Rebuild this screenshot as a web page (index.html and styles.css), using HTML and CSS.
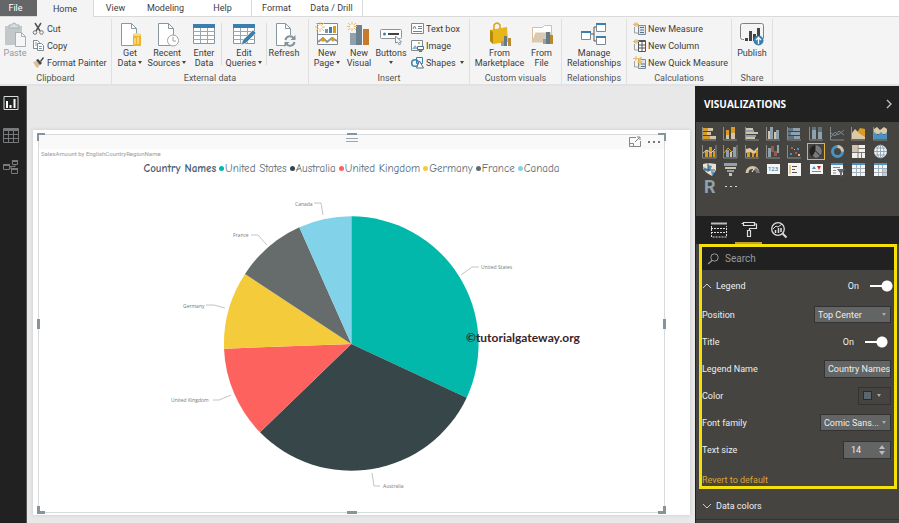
FILE: index.html
```html
<!DOCTYPE html>
<html lang="en">
	<head>
		<meta charset="utf-8">
		<title>Power BI Desktop</title>
		<link rel="stylesheet" href="styles.css">
	</head>
	<body>
		<nav class="tabs">
			<button class="tab file">File</button>
			<button class="tab active">Home</button>
			<button class="tab">View</button>
			<button class="tab long">Modeling</button>
			<button class="tab long">Help</button>
			<button class="tab format">Format</button>
			<button class="tab drill">Data / Drill</button>
		</nav>

		<!-- ribbon -->
		<header class="ribbon">
			<section class="group">
				<div class="tools start">
					<button class="big paste">
						<svg width="24" height="26" viewBox="0 0 24 26"><path d="M2 4h17v19H2z" fill="#c3c8cb"/><path d="M6 6V3h3a2 2 0 0 1 4 0h3v3z" fill="#d9dcde" stroke="#aab1b5"/><path d="M12.500 10.500h6l4 4v10h-10z" fill="#f6f6f6" stroke="#aab1b5"/><path d="M18.500 10.500v4h4" fill="none" stroke="#aab1b5"/></svg>
						<span>Paste</span>
					</button>
					<div class="list">
						<button class="small"><svg width="13" height="13" viewBox="0 0 13 13"><path d="M3 1l5 8M9 1L4 9" stroke="#555" stroke-width="1.500" fill="none"/><circle cx="3" cy="10.500" r="1.800" fill="none" stroke="#777"/><circle cx="9.500" cy="10.500" r="1.800" fill="none" stroke="#777"/></svg>Cut</button>
						<button class="small"><svg width="13" height="13" viewBox="0 0 13 13"><path d="M1.500 1.500h4l2 2v6h-6z" fill="#fff" stroke="#7c8a92"/><path d="M5.500 4.500h4l2 2v5h-6z" fill="#fff" stroke="#7c8a92"/><path d="M3 4h2M3 6h2M7 7.500h3M7 9.500h3" stroke="#7c9cb0"/></svg>Copy</button>
						<button class="small"><svg width="13" height="13" viewBox="0 0 13 13"><path d="M1 6l4-1 3 3-2 4-2-1z" fill="#dcbf93"/><path d="M4 4l2-1 4 4-2 2z" fill="#444"/><path d="M8 5l3-4 1 1-3 4z" fill="#444"/></svg>Format Painter</button>
					</div>
				</div>
				<h2>Clipboard</h2>
			</section>

			<section class="group">
				<div class="tools start">
					<button class="big">
						<svg width="24" height="26" viewBox="0 0 24 26"><path d="M3.500 1.500h10l5 5v17h-15z" fill="#fff" stroke="#8a979e"/><path d="M13.500 1.500v5h5" fill="none" stroke="#8a979e"/><path d="M15 12h8v12h-8z" fill="#eeb52c"/><ellipse cx="19" cy="12.500" rx="4" ry="1.500" fill="#f8d98a"/><path d="M17 16v6M20 15v7" stroke="#fff3cf"/></svg>
						<span>Get<br>Data <i></i></span>
					</button>
					<button class="big wide">
						<svg width="24" height="26" viewBox="0 0 24 26"><path d="M3.500 1.500h10l5 5v17h-15z" fill="#fff" stroke="#8a979e"/><path d="M13.500 1.500v5h5" fill="none" stroke="#8a979e"/><circle cx="18" cy="18.500" r="5.500" fill="#fff" stroke="#9aa5ab"/><path d="M18 15v4h3" fill="none" stroke="#9aa5ab"/></svg>
						<span>Recent<br>Sources <i></i></span>
					</button>
					<button class="big">
						<svg width="24" height="26" viewBox="0 0 24 26"><path d="M1.500 2.500h21v19h-21z" fill="#fff" stroke="#8a979e"/><path d="M1 2h22v4H1z" fill="#3a80ae"/><path d="M1 9.500h22M1 13.500h22M1 17.500h22M8.500 6v15M15.500 6v15" stroke="#9ba8af"/></svg>
						<span>Enter<br>Data</span>
					</button>
					<hr>
					<button class="big wide">
						<svg width="24" height="26" viewBox="0 0 24 26"><path d="M1.500 2.500h21v19h-21z" fill="#fff" stroke="#8a979e"/><path d="M1 2h22v4H1z" fill="#3a80ae"/><path d="M1 9.500h22M1 13.500h22M1 17.500h22M8.500 6v15M15.500 6v15" stroke="#9ba8af"/><path d="M9 23l2-5L21 8l3 3-10 10z" fill="#3a80ae" stroke="#f4f4f4" stroke-width=".6"/></svg>
						<span>Edit<br>Queries <i></i></span>
					</button>
					<hr>
					<button class="big">
						<svg width="24" height="26" viewBox="0 0 24 26"><path d="M4.500 1.500h9l5 5v17h-14z" fill="#fff" stroke="#8a979e"/><path d="M13.500 1.500v5h5" fill="none" stroke="#8a979e"/><circle cx="18" cy="19" r="6" fill="#f4f4f4"/><path d="M13.500 18a4.500 4.500 0 0 1 8-2M22.500 20a4.500 4.500 0 0 1-8 2" fill="none" stroke="#84929a" stroke-width="2"/><path d="M23.500 13v5h-5zM12.500 25v-5h5z" fill="#84929a"/></svg>
						<span>Refresh</span>
					</button>
				</div>
				<h2>External data</h2>
			</section>

			<section class="group">
				<div class="tools start">
					<button class="big">
						<svg width="24" height="26" viewBox="0 0 24 26"><path d="M2.500 1.500h20v21h-20zM2.500 12.500h20" fill="#fff" stroke="#7e8a91"/><path d="M10 7h3v4h-3z" fill="#8496a2"/><path d="M14 5h3v6h-3z" fill="#3a80ae"/><path d="M18 4h3v7h-3z" fill="#d99b22"/><path d="M3 20l5-4 4 4 5-4 5 3" fill="none" stroke="#8496a2" stroke-width="2"/><path d="M5 18l3-3 3 3-3 2zM15 17l3-2 2 2-2 3z" fill="#d99b22"/><path d="M5 0v10M0 5h10M1 1l8 8M9 1L1 9" stroke="#e5ba6c"/><circle cx="5" cy="5" r="2" fill="#fff"/></svg>
						<span>New<br>Page <i></i></span>
					</button>
					<button class="big">
						<svg width="24" height="26" viewBox="0 0 24 26"><path d="M3 11h6v12H3z" fill="#8fa1ac"/><path d="M9 3h6v20H9z" fill="#6b8090"/><path d="M16 7h6v16h-6z" fill="#c7792c"/><path d="M5 0v9M0 4.500h10M1 1l8 7M9 1L1 8" stroke="#e5ba6c"/><circle cx="5" cy="4.500" r="2" fill="#fff"/></svg>
						<span>New<br>Visual</span>
					</button>
					<button class="big">
						<svg width="24" height="26" viewBox="0 0 24 26"><rect x="1.500" y="7.500" width="21" height="9" rx="1" fill="#fff" stroke="#87949b"/><circle cx="5.500" cy="12" r="1.500" fill="#3a80ae"/><path d="M9 12h11" stroke="#444" stroke-width="2"/><path d="M16.500 14v7l2-1 2 3 1-1-1-2h2z" fill="#fff" stroke="#87949b"/></svg>
						<span>Buttons<br><i></i></span>
					</button>
					<div class="list">
						<button class="small"><svg width="13" height="13" viewBox="0 0 13 13"><path d="M.5 1.500h12v10H.5z" fill="#fff" stroke="#7c8a92"/><path d="M2 7l1.500-3L5 7M7 4.500h4M7 6.500h4M2 9.500h9" fill="none" stroke="#6f8593"/></svg>Text box</button>
						<button class="small"><svg width="13" height="13" viewBox="0 0 13 13"><path d="M.5 1.500h11v10H.5z" fill="#fff" stroke="#7c8a92"/><path d="M1 10l3-4 3 4z" fill="#8fb5cc"/><path d="M6.500 7.500h6v3h-6zM8 12.500h3" fill="#fff" stroke="#4c6f88"/><circle cx="8" cy="4" r="1" fill="#d99b22"/></svg>Image</button>
						<button class="small"><svg width="13" height="13" viewBox="0 0 13 13"><circle cx="4" cy="7" r="3.300" fill="none" stroke="#3a80ae" stroke-width="1.500"/><path d="M5.500 1.500h6v6h-6z" fill="none" stroke="#3a80ae"/><path d="M8.500 5l4 7h-7z" fill="#fff" stroke="#4c6f88"/></svg>Shapes <i></i></button>
					</div>
				</div>
				<h2>Insert</h2>
			</section>

			<section class="group">
				<div class="tools">
					<button class="big xwide">
						<svg width="24" height="26" viewBox="0 0 24 26"><path d="M2 8l17-3 1 15-15 2-3-3z" fill="#e8b51b"/><path d="M2 8l3 2v12l-3-3z" fill="#b58a0c"/><path d="M6 8V3q3-4 6 0v4" fill="none" stroke="#d9a514" stroke-width="1.500"/><path d="M13 19h3v5h-3z" fill="#8fa1ac"/><path d="M16 14h3v10h-3z" fill="#647a89"/><path d="M20 16h3v8h-3z" fill="#b9892f"/></svg>
						<span>From<br>Marketplace</span>
					</button>
					<button class="big">
						<svg width="24" height="26" viewBox="0 0 24 26"><path d="M2.500 19.500v-14h10l2-2h7v16z" fill="#fff" stroke="#dcbf93"/><path d="M1.500 20.500l4-10h17l-3 10z" fill="#d8c9b0"/><path d="M13 17h3v5h-3z" fill="#8fa1ac"/><path d="M16 10h4v12h-4z" fill="#647a89"/><path d="M20 13h3v9h-3z" fill="#b9892f"/></svg>
						<span>From<br>File</span>
					</button>
				</div>
				<h2>Custom visuals</h2>
			</section>

			<section class="group">
				<div class="tools">
					<button class="big xwide">
						<svg width="26" height="26" viewBox="0 0 26 26"><path d="M8 12h5V5h4M13 12v7h4" fill="none" stroke="#555"/><path d="M.5 9.500h9v8h-9zM15.500 1.500h9v8h-9zM15.500 14.500h9v8h-9z" fill="#fff" stroke="#7e8a91"/><path d="M0 9h10v2H0zM15 1h10v2H15zM15 14h10v2H15z" fill="#3a80ae"/></svg>
						<span>Manage<br>Relationships</span>
					</button>
				</div>
				<h2>Relationships</h2>
			</section>

			<section class="group">
				<div class="tools start">
					<div class="list">
						<button class="small"><svg width="13" height="13" viewBox="0 0 13 13"><path d="M1.500 5v6h4" fill="none" stroke="#98a3a9"/><path d="M5.500 3.500h7v9h-7z" fill="#dfe5e8" stroke="#7c8a92"/><path d="M7 5.500h4M7 8h4M7 10.500h4" stroke="#54788f"/><path d="M3 0v5M0 2.500h6M1 1l4 3M5 1L1 4" stroke="#e5ba6c"/></svg>New Measure</button>
						<button class="small"><svg width="13" height="13" viewBox="0 0 13 13"><path d="M1.500 5v6h4" fill="none" stroke="#98a3a9"/><path d="M5.500 1.500h7v11h-7z" fill="#fff" stroke="#555"/><path d="M5 2.500h8M5 6h8M5 9h8M9 2v10" stroke="#555"/><path d="M3 0v5M0 2.500h6M1 1l4 3M5 1L1 4" stroke="#e5ba6c"/></svg>New Column</button>
						<button class="small"><svg width="13" height="13" viewBox="0 0 13 13"><path d="M1.500 5v6h4" fill="none" stroke="#98a3a9"/><path d="M5.500 3.500h7v9h-7z" fill="#dfe5e8" stroke="#7c8a92"/><path d="M8 8h4M8 10.500h4" stroke="#54788f"/><path d="M7 1L4 7h3l-2 5 5-7H7l2-4z" fill="#e8bf60"/><path d="M3 0v5M0 2.500h6" stroke="#e5ba6c"/></svg>New Quick Measure</button>
					</div>
				</div>
				<h2>Calculations</h2>
			</section>

			<section class="group">
				<div class="tools">
					<button class="big wide">
						<svg width="26" height="26" viewBox="0 0 26 26"><path d="M5 17.500H3.500a2 2 0 0 1-2-2v-12a2 2 0 0 1 2-2h19a2 2 0 0 1 2 2v13" fill="none" stroke="#87807a"/><path d="M7.500 19v-3M11.500 19V9M15.500 19v-7M19.500 19V6" stroke="#444" stroke-width="3"/><circle cx="19.500" cy="18.500" r="5" fill="#3a80ae"/><path d="M19.500 22v-6M17 18l2.500-2.500L22 18" fill="none" stroke="#fff" stroke-width="1.300"/></svg>
						<span>Publish</span>
					</button>
				</div>
				<h2>Share</h2>
			</section>
		</header>

		<main class="workspace">
			<nav class="rail">
				<button aria-label="Report"><svg width="16" height="16" viewBox="0 0 16 16"><path d="M1 1.500h14v13H1z" fill="none" stroke="#d5dde0"/><path d="M4 13V6M7.500 13v-3M11.500 13V4" stroke="#fff" stroke-width="2"/></svg></button>
				<button aria-label="Data"><svg width="16" height="16" viewBox="0 0 16 16"><path d="M.5 1.500h15v14H.5zM1 3.500h14M1 7.500h14M1 11.500h14M5.500 4v11M10.500 4v11" fill="none" stroke="#77797a"/><path d="M1 2h14v2H1z" fill="#77797a"/></svg></button>
				<button aria-label="Relationships"><svg width="16" height="16" viewBox="0 0 16 16"><path d="M.5 5.500h6v5h-6zM9.500 1.500h5v4h-5zM8.500 9.500h6v5h-6zM6 7.500h6V5M8 7.500V10" fill="none" stroke="#77797a"/><path d="M0 5h7v2H0zM9 1h6v2H9zM8 9h7v2H8z" fill="#77797a"/></svg></button>
			</nav>

			<div class="canvas">
				<div class="page">
					<article class="visual">
						<b class="handle tl"></b><b class="handle tr"></b><b class="handle bl"></b><b class="handle br"></b>
						<b class="handle tc"></b><b class="handle bc"></b><b class="handle lc"></b><b class="handle rc"></b>
						<div class="visual-bar">
							<span class="grip"></span>
							<button aria-label="Focus mode"><svg width="12" height="12" viewBox="0 0 12 12"><path d="M7 1.500H.5v9h11V5M.5 7.500h4v3M6 6l4.500-4.500M8 1h3v3" fill="none" stroke="#8b8580"/></svg></button>
							<button aria-label="More options"><svg width="12" height="12" viewBox="0 0 12 12"><path d="M0 5h2v2H0zM5 5h2v2H5zM10 5h2v2h-2z" fill="#777"/></svg></button>
						</div>
						<h1>SalesAmount by EnglishCountryRegionName</h1>
						<ul class="legend">
							<li class="name">Country Names</li>
							<li class="us">United States</li>
							<li class="au">Australia</li>
							<li class="uk">United Kingdom</li>
							<li class="de">Germany</li>
							<li class="fr">France</li>
							<li class="ca">Canada</li>
						</ul>
						<svg class="pie" viewBox="0 0 625 334">
							<path fill="#01b8aa" d="M312.300 166V38.300A127.700 127.700 0 0 1 427.700 219.700z"/>
							<path fill="#374649" d="M312.300 166L427.700 219.700A127.700 127.700 0 0 1 221 254.300z"/>
							<path fill="#fd625e" d="M312.300 166L221 254.300A127.700 127.700 0 0 1 185 170.700z"/>
							<path fill="#f4cb3b" d="M312.300 166L185 170.700A127.700 127.700 0 0 1 206 96z"/>
							<path fill="#666b6b" d="M312.300 166L206 96A127.700 127.700 0 0 1 260.300 49.300z"/>
							<path fill="#82d3e9" d="M312.300 166L260.300 49.300A127.700 127.700 0 0 1 312.300 38.300z"/>
							<g class="leader">
								<path d="M275 25h7l2 12M422 97l11-8h7M212 57h7l9 10M167 127h8l11 3M174 222h6l12-5M333 295l2 13h6"/>
							</g>
							<text x="256" y="28">Canada</text>
							<text x="442" y="91">United States</text>
							<text x="194" y="59">France</text>
							<text x="144" y="130">Germany</text>
							<text x="132" y="224">United Kingdom</text>
							<text x="344" y="310">Australia</text>
							<text class="mark" x="427" y="164">©tutorialgateway.org</text>
						</svg>
					</article>
				</div>
			</div>

			<aside class="panel">
				<header>
					<h2>VISUALIZATIONS</h2>
					<button aria-label="Collapse"><svg width="6" height="10" viewBox="0 0 6 10"><path d="M1 1l4 4-4 4" fill="none" stroke="#c4c2bf" stroke-width="1.300"/></svg></button>
				</header>

				<div class="gallery">
					<button aria-label="Stacked bar"><svg viewBox="0 0 15 15"><path class="axis" d="M.5 1v13H14"/><path d="M1 2h5v3H1zM1 6h4v3H1zM1 10h7v3H1z" fill="#d99b22"/><path d="M6 2h5v3H6zM5 6h4v3H5zM8 10h6v3H8z" fill="#d2c4aa"/></svg></button>
					<button aria-label="Stacked column"><svg viewBox="0 0 15 15"><path class="axis" d="M.5 1v13H14"/><path d="M3 9h3v4H3zM8 7h4v6H8z" fill="#d2c4aa"/><path d="M3 4h3v5H3zM8 1h4v6H8z" fill="#d99b22"/></svg></button>
					<button aria-label="Clustered bar"><svg viewBox="0 0 15 15"><path class="axis" d="M.5 1v13H14"/><path d="M1 2h7v2H1zM1 6h12v2H1zM1 11h9v2H1z" fill="#d2c4aa"/><path d="M1 4h8v2H1zM1 9h10v2H1z" fill="#8fa1ac"/></svg></button>
					<button aria-label="Clustered column"><svg viewBox="0 0 15 15"><path class="axis" d="M.5 1v13H14"/><path d="M2 5h2v8H2zM8 6h2v7H8z" fill="#d2c4aa"/><path d="M4 1h3v12H4zM10 4h3v9h-3z" fill="#8fa1ac"/></svg></button>
					<button aria-label="100% bar"><svg viewBox="0 0 15 15"><path class="axis" d="M.5 1v13H14"/><path d="M1 2h5v3H1zM1 6h3v3H1zM1 10h6v3H1z" fill="#5f7380"/><path d="M6 2h7v3H6zM4 6h9v3H4zM7 10h6v3H7z" fill="#8fa1ac"/></svg></button>
					<button aria-label="100% column"><svg viewBox="0 0 15 15"><path class="axis" d="M.5 1v13H14"/><path d="M3 1h4v12H3zM9 1h4v12H9z" fill="#8fa1ac"/><path d="M3 1h4v3H3zM9 1h4v5H9z" fill="#5f7380"/></svg></button>
					<button aria-label="Line"><svg viewBox="0 0 15 15"><path class="axis" d="M.5 1v13H14"/><path d="M1 11l4-5 3 3 6-5" fill="none" stroke="#4b92c0"/><path d="M1 7l4 3 4-5 5 4" fill="none" stroke="#9a8877"/></svg></button>
					<button aria-label="Area"><svg viewBox="0 0 15 15"><path class="axis" d="M.5 1v13H14"/><path d="M5 8l4-6 5 1v10H5z" fill="#d99b22"/><path d="M1 13V7l3-4 5 5 5 3v2z" fill="#dcc9a5"/></svg></button>
					<button aria-label="Stacked area"><svg viewBox="0 0 15 15"><path class="axis" d="M.5 1v13H14"/><path d="M1 8V3l3-2 3 3 4-3 3 2v5z" fill="#dcc9a5"/><path d="M1 13V6l4 3 3-3 3 3 3-3v7z" fill="#4b92c0"/></svg></button>

					<button aria-label="Line and stacked column"><svg viewBox="0 0 15 15"><path class="axis" d="M.5 1v13H14V1"/><path d="M3 6h3v7H3zM7 3h3v10H7zM11 7h2v6h-2z" fill="#d99b22"/><path d="M1 9l4-3 4 3 4-4" fill="none" stroke="#dcc9a5"/></svg></button>
					<button aria-label="Line and clustered column"><svg viewBox="0 0 15 15"><path class="axis" d="M.5 1v13H14V1"/><path d="M3 6h3v7H3zM10 3h3v10h-3z" fill="#8fa1ac"/><path d="M7 8h2v5H7z" fill="#d2c4aa"/><path d="M1 9l4-5 4 4 4-4" fill="none" stroke="#d99b22"/></svg></button>
					<button aria-label="Ribbon"><svg viewBox="0 0 15 15"><path class="axis" d="M.5 1v13H14"/><path d="M1 5l4-1 4 3 4-4v4l-4 3-4-2-4 1z" fill="#dcc9a5"/><path d="M2 8h3v5H2zM7 9h2v4H7zM11 6h2v7h-2z" fill="#d99b22"/></svg></button>
					<button aria-label="Waterfall"><svg viewBox="0 0 15 15"><path class="axis" d="M.5 1v13H14"/><path d="M2 4h3v9H2zM11 1h2v8h-2z" fill="#8fa1ac"/><path d="M5 2h3v6H5zM8 7h3v5H8z" fill="#9a5948"/></svg></button>
					<button aria-label="Scatter"><svg viewBox="0 0 15 15"><path class="axis" d="M.5 1v13H14"/><path d="M4 3h2v2H4zM8 8h2v2H8z" fill="#b35c4c"/><path d="M10 4h2v2h-2zM3 9h2v2H3z" fill="#4b92c0"/><path d="M7 5h1v1H7zM11 10h2v2h-2z" fill="#d2c4aa"/></svg></button>
					<button aria-label="Pie" class="picked"><svg viewBox="0 0 15 15"><circle cx="7.500" cy="7.500" r="6.500" fill="#222"/><path d="M7 7V1a6.500 6.500 0 0 1 0 13L4 12z" fill="#777b7c"/><path d="M7 7l5 5" stroke="#222"/></svg></button>
					<button aria-label="Donut"><svg viewBox="0 0 15 15"><circle cx="7.500" cy="7.500" r="5" fill="none" stroke="#4b92c0" stroke-width="3"/><path d="M7.500 2.500a5 5 0 0 1 5 5" fill="none" stroke="#d2c4aa" stroke-width="3"/></svg></button>
					<button aria-label="Treemap"><svg viewBox="0 0 15 15"><path d="M1 1h13v13H1z" fill="#f3f0ea"/><path d="M1 1h5v7H1z" fill="#d2c4aa"/><path d="M7 1v13M1 8.500h13M10.500 8v6M7 4.500h7" stroke="#777"/></svg></button>
					<button aria-label="Map"><svg viewBox="0 0 15 15"><circle cx="7.500" cy="7.500" r="6.500" fill="#f5f5f5"/><path d="M1 7.500h13M7.500 1v13M2.500 4h10M2.500 11h10" stroke="#91a7b5"/><ellipse cx="7.500" cy="7.500" rx="3.500" ry="6.500" fill="none" stroke="#91a7b5"/></svg></button>

					<button aria-label="Filled map"><svg viewBox="0 0 15 15"><path d="M1 2l5-1 8 1v6l-4 6-5-3-4-4z" fill="#e9e1d2"/><path d="M1 5l5 2V3l4 1-2 5-6-1zM9 9l4 1-3 4z" fill="#4b92c0"/><path d="M6 1v9M1 8h12" stroke="#56585a"/></svg></button>
					<button aria-label="Funnel"><svg viewBox="0 0 15 15"><path d="M1 1h13v3H1zM4 8h7v2H4z" fill="#8fa1ac"/><path d="M2 5h11v2H2zM6 11h3v3H6z" fill="#d2c4aa"/></svg></button>
					<button aria-label="Gauge"><svg viewBox="0 0 15 15"><path d="M2 11a5.500 5.500 0 0 1 11 0" fill="none" stroke="#d2c4aa" stroke-width="3"/><path d="M10 7a5.500 5.500 0 0 1 3 4" fill="none" stroke="#777b7c" stroke-width="3"/><path d="M7 10l2-3" stroke="#fff"/></svg></button>
					<button aria-label="Card"><svg viewBox="0 0 15 15"><path d="M1 2h13v10H1z" fill="#f5f5f5"/><text x="2" y="9">123</text></svg></button>
					<button aria-label="Multi-row card"><svg viewBox="0 0 15 15"><path d="M1 1h13v13H1z" fill="#f5f5f5"/><path d="M3 3v9" stroke="#d99b22"/><path d="M5 4.500h5M5 7.500h3M5 10.500h5" stroke="#555"/></svg></button>
					<button aria-label="KPI"><svg viewBox="0 0 15 15"><path d="M1 2h13v10H1z" fill="#f5f5f5"/><path d="M3 7l2-3 2 3z" fill="#4b92c0"/><path d="M8 4h4l-2 4z" fill="#b33"/><path d="M3 9.500h9" stroke="#888"/></svg></button>
					<button aria-label="Slicer"><svg viewBox="0 0 15 15"><path d="M1 1h12v12H1z" fill="#f5f5f5"/><path d="M1 1h12v2H1z" fill="#4b92c0"/><path d="M3 5.500h7M3 8.500h3M3 11h3" stroke="#888"/><path d="M7 7h8l-3 4v4l-2-2v-2z" fill="#67696a"/></svg></button>
					<button aria-label="Table"><svg viewBox="0 0 15 15"><path d="M1 1h13v13H1z" fill="#f5f5f5"/><path d="M1 1h13v2H1z" fill="#4b92c0"/><path d="M1 6.500h13M1 10.500h13M5.500 3v11M9.500 3v11" stroke="#a5b1b8"/></svg></button>
					<button aria-label="Matrix"><svg viewBox="0 0 15 15"><path d="M1 1h13v13H1z" fill="#f5f5f5"/><path d="M1 1h13v2H1z" fill="#4b92c0"/><path d="M9 6h5v8H9z" fill="#c4cfd6"/><path d="M1 6.500h13M1 10.500h13M5.500 3v11M9.500 3v11" stroke="#a5b1b8"/></svg></button>

					<button class="script">R</button>
					<button aria-label="Import"><svg viewBox="0 0 15 15"><path d="M2 6h2v1H2zM7 6h2v1H7zM12 6h2v1h-2z" fill="#d8d8d8"/></svg></button>
				</div>

				<div class="modes">
					<button aria-label="Fields"><svg width="18" height="18" viewBox="0 0 18 18"><path d="M1 2.500h16" stroke="#bbb" stroke-width="2"/><path d="M1.500 5v11h15V5M1 7.500h16M1 11.500h16" fill="none" stroke="#ddd" stroke-dasharray="2 1"/></svg></button>
					<button aria-label="Format" class="on"><svg width="18" height="18" viewBox="0 0 18 18"><path d="M3.500 2.500h11v3h-11zM3 3.500H1.500M15 4h1.500v4.500h-7V11M7.500 10.500h3v6h-3z" fill="none" stroke="#ddd" stroke-width="1.200"/></svg></button>
					<button aria-label="Analytics"><svg width="18" height="18" viewBox="0 0 18 18"><circle cx="8" cy="8" r="6.300" fill="none" stroke="#ddd" stroke-width="1.300"/><path d="M12.500 12.500l4 4" stroke="#ddd" stroke-width="2"/><path d="M5.500 12V9M8.500 12V7M11 11V7" stroke="#ddd" stroke-width="1.500"/><path d="M3 8l3-3 2 1 4-3" fill="none" stroke="#ddd"/></svg></button>
				</div>

				<form class="options">
					<label class="search">
						<svg width="12" height="12" viewBox="0 0 12 12"><circle cx="7.500" cy="4.500" r="3.700" fill="none" stroke="#999"/><path d="M5 7.500L1 11" stroke="#999" stroke-width="1.200"/></svg>
						<input type="search" placeholder="Search">
					</label>
					<div class="row head">
						<svg width="10" height="6" viewBox="0 0 10 6"><path d="M1 5l4-4 4 4" fill="none" stroke="#ccc"/></svg>
						<span>Legend</span>
						<label class="switch">On <input type="checkbox" checked></label>
					</div>
					<div class="row">
						<label for="position">Position</label>
						<span class="drop"><select id="position"><option>Top Center</option></select></span>
					</div>
					<div class="row title">
						<span>Title</span>
						<label class="switch">On <input type="checkbox" checked></label>
					</div>
					<div class="row">
						<label for="legend-name">Legend Name</label>
						<input class="field" id="legend-name" type="text" value="Country Names">
					</div>
					<div class="row">
						<label for="color">Color</label>
						<button class="color" id="color" type="button"><b></b><i></i></button>
					</div>
					<div class="row">
						<label for="family">Font family</label>
						<span class="drop short"><select id="family"><option>Comic Sans...</option></select></span>
					</div>
					<div class="row">
						<label for="size">Text size</label>
						<span class="spin"><input id="size" type="text" value="14"></span>
					</div>
					<a class="revert" href="#">Revert to default</a>
				</form>

				<div class="row head next">
					<svg width="10" height="6" viewBox="0 0 10 6"><path d="M1 1l4 4 4-4" fill="none" stroke="#ccc"/></svg>
					<span>Data colors</span>
				</div>
			</aside>
		</main>
	</body>
</html>
```
FILE: styles.css
```css
*{
	margin: 0;padding: 0;
	box-sizing: border-box;
}
body{
	min-height: 100vh;
	display: flex;
	flex-direction: column;
	font-family: Roboto,"Open Sans",sans-serif;
	font-size: 9px;
	color: #3c3c3c;
	background: #fff;
	overflow: hidden;
}
button,input,select{
	font: inherit;
	color: inherit;
	background: none;
	border: none;
	border-radius: 0;
	appearance: none;
	outline: none;
}
svg{
	display: block;
	flex: none;
}
i{
	display: inline-block;
	border: 2px solid transparent;
	border-top: 3px solid #444;
	border-bottom: 0;
	vertical-align: 2px;
}

/* tabs */
.tabs{
	display: flex;
	height: 17px;
	border-bottom: 1px solid #dadada;
}
.tab{
	width: 43px;
	line-height: 16px;
}
.tab.file{
	width: 37px;
	padding-right: 6px;
	background: #646667;
	color: #fff;
}
.tab.active{
	width: 57px;
	height: 17px;
	background: #f4f4f4;
	border-right: 1px solid #dadada;
}
.tab.long{
	width: 57px;
}
.tab.format{
	width: 50px;
	border-left: 1px solid #dadada;
}
.tab.drill{
	width: 62px;
	border-right: 1px solid #dadada;
}

/* ribbon */
.ribbon{
	display: grid;
	grid-template-columns: 112px 197px 161px 92px 65px 105px 41px;
	height: 69px;
	padding-top: 2px;
	background: #f4f4f4;
	border-bottom: 2px solid #e2e2e2;
}
.group{
	display: flex;
	flex-direction: column;
	border-right: 1px solid #e0e0e0;
	white-space: nowrap;
}
.tools{
	display: flex;
	justify-content: center;
	height: 54px;
}
.tools.start{
	justify-content: flex-start;
	padding-left: 2px;
}
.group h2{
	font-size: 9px;
	line-height: 11px;
	font-weight: normal;
	text-align: center;
	color: #555;
}
.big{
	display: flex;
	flex-direction: column;
	align-items: center;
	width: 32px;
	padding-top: 3px;
	line-height: 10px;
}
.big span{
	display: block;
}
.big.wide{
	width: 42px;
}
.big.xwide{
	width: 52px;
}
.big.paste{
	width: 26px;
	color: #999;
}
.tools hr{
	width: 1px;
	height: 42px;
	margin: 4px 1px 0;
	border: none;
	background: #dcdcdc;
}
.list{
	flex: none;
	padding: 1px 0 0 4px;
}
.small{
	display: flex;
	align-items: center;
	gap: 2px;
	height: 17px;
}
.small i{
	margin-left: 2px;
}

/* workspace */
.workspace{
	flex: 1;
	display: flex;
}
.rail{
	width: 27px;
	padding: 9px 0 0 3px;
	background: #212121;
	border-right: 1px solid #555;
}
.rail button{
	display: block;
	margin-bottom: 16px;
}
.canvas{
	flex: 1;
	display: flex;
	padding: 44px 5px 8px 6px;
	background: #e8e8e8;
	min-width: 0;
}
.page{
	flex: 1;
	display: flex;
	padding: 4px 25px 2px 5px;
	background: #fff;
	box-shadow: 0 0 3px 1px #d4d6d8;
	min-width: 0;
}
.visual{
	position: relative;
	flex: 1;
	display: flex;
	flex-direction: column;
	border: 1px solid #d8dadb;
	min-width: 0;
}
.visual-bar{
	position: relative;
	display: flex;
	justify-content: flex-end;
	gap: 7px;
	height: 14px;
	padding: 0 4px 0 0;
	background: #f9f9f9;
}
.grip{
	position: absolute;
	left: 50%;
	top: 3px;
	width: 12px;
	height: 4px;
	margin-left: -6px;
	border-top: 1px solid #9aa6ad;
	border-bottom: 1px solid #9aa6ad;
}
.handle{
	position: absolute;
	width: 8px;
	height: 8px;
	border: 0 solid #87949c;
}
.tl{
	left: -2px;top: -2px;
	border-width: 3px 0 0 3px;
}
.tr{
	right: -2px;top: -2px;
	border-width: 3px 3px 0 0;
}
.bl{
	left: -2px;bottom: -2px;
	border-width: 0 0 3px 3px;
}
.br{
	right: -2px;bottom: -2px;
	border-width: 0 3px 3px 0;
}
.tc,.bc{
	left: 50%;
	margin-left: -5px;
	width: 10px;
	height: 3px;
	background: #87949c;
}
.tc{
	top: -2px;
}
.bc{
	bottom: -2px;
}
.lc,.rc{
	top: 50%;
	margin-top: -5px;
	width: 3px;
	height: 10px;
	background: #87949c;
}
.lc{
	left: -2px;
}
.rc{
	right: -2px;
}
.visual h1{
	padding-left: 2px;
	font-size: 6px;
	line-height: 10px;
	font-weight: normal;
	color: #999;
}
.legend{
	display: flex;
	justify-content: center;
	gap: 3px;
	list-style: none;
	font-family: "Comic Sans MS","Comic Neue","Open Sans",sans-serif;
	font-size: 11px;
	line-height: 19px;
	height: 19px;
	color: #5b6b73;
	white-space: nowrap;
}
.legend li{
	display: flex;
	align-items: center;
	gap: 1px;
}
.legend li::before{
	content: "";
	width: 5px;
	height: 5px;
	border-radius: 50%;
	background: #01b8aa;
}
.legend .name{
	font-weight: bold;
	color: #4a6073;
}
.legend .name::before{
	display: none;
}
.legend .au::before{
	background: #374649;
}
.legend .uk::before{
	background: #fd625e;
}
.legend .de::before{
	background: #f4cb3b;
}
.legend .fr::before{
	background: #5f6b6d;
}
.legend .ca::before{
	background: #82d3e9;
}
.pie{
	flex: 1;
	width: 100%;
	min-height: 0;
}
.pie text{
	font-family: "Open Sans",sans-serif;
	font-size: 5px;
	fill: #777;
}
.pie .mark{
	font-family: Lato,sans-serif;
	font-size: 12px;
	font-weight: bold;
	fill: #3d2527;
}
.leader{
	fill: none;
	stroke: #c4c4c4;
}

/* panel */
.panel{
	width: 204px;
	background: #454441;
	color: #eee;
	border-left: 1px solid #212121;
}
.panel header{
	display: flex;
	justify-content: space-between;
	align-items: center;
	height: 36px;
	padding: 0 7px 0 8px;
	background: #212121;
}
.panel h2{
	font-family: "Open Sans",sans-serif;
	font-size: 10px;
	font-weight: bold;
	color: #fff;
}
.gallery{
	display: grid;
	grid-template-columns: repeat(9,1fr);
	grid-auto-rows: 18px;
	height: 94px;
	padding: 2px 8px 0 3px;
}
.gallery button{
	display: flex;
	align-items: center;
	justify-content: center;
}
.gallery svg{
	width: 15px;
	height: 15px;
}
.gallery .axis{
	fill: none;
	stroke: #8a8a88;
}
.gallery text{
	font-size: 6px;
	fill: #34617f;
}
.gallery .picked svg{
	width: 18px;
	height: 17px;
	border: 1px solid #e0b440;
}
.gallery .script{
	font-size: 18px;
	font-weight: bold;
	line-height: 18px;
	color: #8fa1ac;
}
.modes{
	display: flex;
	gap: 3px;
	height: 28px;
	padding-left: 9px;
	background: #212121;
}
.modes button{
	display: flex;
	align-items: center;
	justify-content: center;
	width: 27px;
}
.modes .on{
	border-bottom: 2px solid #c59f2d;
}
.options{
	margin: 0 2px 0 3px;
	border: 3px solid #f4e10b;
	height: 245px;
}
.search{
	display: flex;
	align-items: center;
	gap: 6px;
	height: 23px;
	padding-left: 5px;
	background: #212121;
}
.search input{
	width: 100px;
	font-size: 10px;
}
.search input::placeholder{
	color: #999;
	opacity: 1;
}
.row{
	display: flex;
	align-items: center;
	justify-content: space-between;
	height: 27px;
	padding-right: 3px;
	white-space: nowrap;
}
.row.head{
	justify-content: flex-start;
	gap: 4px;
	height: 31px;
	padding-right: 1px;
}
.row.title{
	padding-right: 6px;
}
.switch{
	display: flex;
	align-items: center;
	gap: 11px;
	margin-left: auto;
}
.switch input{
	width: 23px;
	height: 12px;
	background:
		radial-gradient(circle at 17px 6px,#fff 5px,transparent 6px),
		linear-gradient(#fff,#fff) 0 5px / 14px 2px no-repeat;
}
.drop,.spin{
	position: relative;
	width: 77px;
	height: 17px;
	background: #636464;
	border: 1px solid #333;
}
.drop.short{
	width: 71px;
}
.drop select{
	width: 100%;
	height: 15px;
	padding-left: 3px;
}
.drop::after{
	content: "";
	position: absolute;
	right: 4px;
	top: 6px;
	border: 2px solid transparent;
	border-top: 3px solid #aaa;
}
.field{
	width: 67px;
	height: 18px;
	padding-left: 3px;
	background: #636464;
	border: 1px solid #333;
}
.color{
	display: flex;
	align-items: center;
	gap: 5px;
	width: 33px;
	height: 18px;
	padding-left: 4px;
	border: 1px solid #333;
}
.color b{
	width: 9px;
	height: 9px;
	background: #59666d;
	border: 1px solid #2b2b2b;
}
.color i{
	border-top-color: #aaa;
}
.spin{
	width: 48px;
	height: 18px;
}
.spin input{
	width: 30px;
	height: 16px;
	padding-left: 7px;
}
.spin::before,.spin::after{
	content: "";
	position: absolute;
	right: 5px;
	border: 3px solid transparent;
}
.spin::before{
	top: 0;
	border-bottom: 4px solid #bbb;
}
.spin::after{
	bottom: 0;
	border-top: 4px solid #bbb;
}
.revert{
	display: block;
	padding-top: 10px;
	line-height: 14px;
	color: #dba532;
	text-decoration: none;
}
.row.next{
	padding: 4px 0 0 6px;
	border-bottom: 1px solid #333;
}
```
